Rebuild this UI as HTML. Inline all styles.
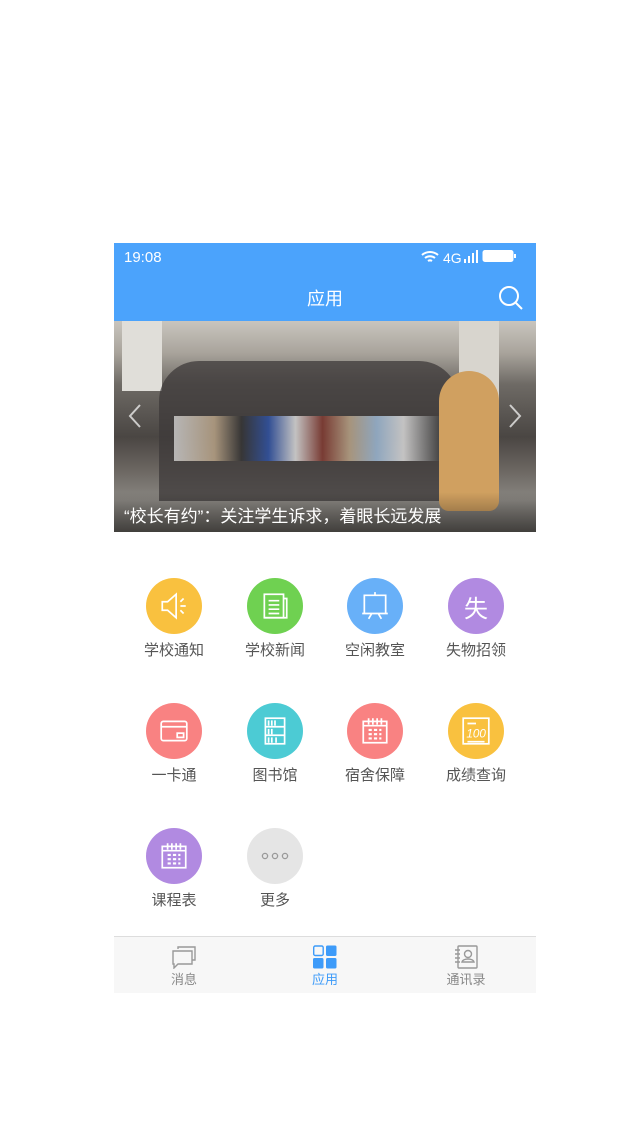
<!DOCTYPE html>
<html><head><meta charset="utf-8"><style>
*{margin:0;padding:0;box-sizing:border-box}
body{width:640px;height:1136px;background:#fff;position:relative;font-family:"Liberation Sans","Noto Sans CJK SC",sans-serif;overflow:hidden}
.scr{position:absolute;left:114px;top:243px;width:422px;height:750px;background:#fff}
.sb{position:absolute;left:0;top:0;width:422px;height:78px;background:#4ba3fc;color:#fff}
.photo{position:absolute;left:0;top:78px;width:422px;height:211px;overflow:hidden;
background:linear-gradient(180deg,#c9c5be 0%,#a9a49c 15%,#6e6a65 30%,#4a4643 55%,#6a6560 70%,#8a8782 85%,#77736e 100%)}
.it{position:absolute;width:100px;text-align:center;font-size:15px;color:#555}
.it .c{width:56px;height:56px;border-radius:50%;margin:0 auto 5px;display:flex;align-items:center;justify-content:center}
.tab{position:absolute;top:693px;left:0;width:422px;height:57px;background:#f7f7f7;border-top:1px solid #ddd}
.tb{position:absolute;top:0;width:100px;text-align:center;font-size:13px;color:#888}
</style></head><body>
<div class="scr">
<div class="sb">
 <div style="position:absolute;left:10px;top:6px;font-size:15px">19:08</div>
 <svg style="position:absolute;left:307px;top:6px" width="104" height="16" viewBox="0 0 104 16">
  <path d="M1 6a12 12 0 0 1 16 0M4 9a8 8 0 0 1 10 0M7 12a3.5 3.5 0 0 1 4 0" stroke="#fff" stroke-width="2" fill="none"/>
  <text x="22" y="14" fill="#fff" font-size="14" font-family="Liberation Sans">4G</text>
  <rect x="43" y="10" width="2" height="4" fill="#fff"/><rect x="47" y="7" width="2" height="7" fill="#fff"/><rect x="51" y="4" width="2" height="10" fill="#fff"/><rect x="55" y="1" width="2" height="13" fill="#fff"/>
  <rect x="62" y="1.5" width="30" height="11" rx="2" fill="#fff" stroke="#fff"/><rect x="93" y="5" width="2" height="4" fill="#fff"/>
 </svg>
 <div style="position:absolute;left:0;width:422px;top:42px;text-align:center;font-size:18px">应用</div>
 <svg style="position:absolute;left:384px;top:42px" width="26" height="26" viewBox="0 0 26 26"><circle cx="11" cy="11" r="9" stroke="#fff" stroke-width="2" fill="none"/><path d="M17.5 17.5L24 24" stroke="#fff" stroke-width="2"/></svg>
</div>
<div class="photo">
 <div style="position:absolute;left:8px;top:0;width:40px;height:70px;background:#e0ded9"></div>
 <div style="position:absolute;left:345px;top:0;width:40px;height:80px;background:#d8d5ce"></div>
 <div style="position:absolute;left:45px;top:40px;width:300px;height:140px;background:#3d3a39;border-radius:40px 40px 0 0;opacity:.75"></div>
 <div style="position:absolute;left:60px;top:95px;width:270px;height:45px;background:linear-gradient(90deg,#ddd 0,#c8b090 15%,#333 25%,#2c54b0 35%,#eee 45%,#8a3a30 55%,#c8b090 65%,#a8c8e8 75%,#eee 85%,#333 100%);opacity:.75"></div>
 <div style="position:absolute;left:325px;top:50px;width:60px;height:140px;background:#d0a060;border-radius:30px 30px 10px 10px"></div>
 <div style="position:absolute;left:0;bottom:0;width:422px;height:40px;background:linear-gradient(180deg,rgba(0,0,0,0),rgba(0,0,0,.45))"></div>
 <div style="position:absolute;left:10px;top:181px;color:#fff;font-size:17px">“校长有约”：关注学生诉求，着眼长远发展</div>
 <svg style="position:absolute;left:14px;top:82px" width="14" height="26"><path d="M12 2L2 13l10 11" stroke="#fff" stroke-opacity=".7" stroke-width="2" fill="none"/></svg>
 <svg style="position:absolute;left:394px;top:82px" width="14" height="26"><path d="M2 2l10 11L2 24" stroke="#fff" stroke-opacity=".7" stroke-width="2" fill="none"/></svg>
</div>

<div class="it" style="left:10px;top:335px"><div class="c" style="background:#f9c13f"><svg width="32" height="32" viewBox="0 0 30 30" fill="none" stroke="#fff" stroke-width="1.6"><path d="M4 11h5l8-7v22l-8-7H4z"/><path d="M21 11l3-3M21 15h5M21 19l3 3"/></svg></div>学校通知</div>
<div class="it" style="left:111px;top:335px"><div class="c" style="background:#6fd151"><svg width="32" height="32" viewBox="0 0 30 30" fill="none" stroke="#fff" stroke-width="1.6"><rect x="5" y="4" width="18" height="22"/><path d="M23 8h3v18H5M9 10h10M9 14h10M9 18h10M9 22h10"/></svg></div>学校新闻</div>
<div class="it" style="left:211px;top:335px"><div class="c" style="background:#68b0f8"><svg width="32" height="32" viewBox="0 0 30 30" fill="none" stroke="#fff" stroke-width="1.6"><path d="M15 2v3M5 5h20v17H5zM3 22h24M12 22l-3 5M18 22l3 5"/></svg></div>空闲教室</div>
<div class="it" style="left:312px;top:335px"><div class="c" style="background:#b18ae1;color:#fff;font-size:24px">失</div>失物招领</div>

<div class="it" style="left:10px;top:460px"><div class="c" style="background:#f98282"><svg width="32" height="32" viewBox="0 0 30 30" fill="none" stroke="#fff" stroke-width="1.6"><rect x="3" y="6" width="24" height="18" rx="2"/><path d="M3 11h24"/><rect x="18" y="17" width="6" height="4"/></svg></div>一卡通</div>
<div class="it" style="left:111px;top:460px"><div class="c" style="background:#4ccbd4"><svg width="32" height="32" viewBox="0 0 30 30" fill="none" stroke="#fff" stroke-width="1.6"><rect x="6" y="3" width="18" height="24"/><path d="M6 11h18M6 19h18M9 5v5M12 5v5M15 5v5M9 13v5M12 13v5M9 21v5M12 21v5M16 21v5"/></svg></div>图书馆</div>
<div class="it" style="left:211px;top:460px"><div class="c" style="background:#f98282"><svg width="32" height="32" viewBox="0 0 30 30" fill="none" stroke="#fff" stroke-width="1.6"><rect x="4" y="6" width="22" height="20"/><path d="M4 10h22M9 3v6M13 3v6M17 3v6M21 3v6"/><path d="M9 14h3M14 14h3M19 14h2M9 18h3M14 18h3M19 18h2M9 22h3M14 22h3M19 22h2" stroke-width="2"/></svg></div>宿舍保障</div>
<div class="it" style="left:312px;top:460px"><div class="c" style="background:#f9c13f"><svg width="32" height="32" viewBox="0 0 30 30" fill="none" stroke="#fff" stroke-width="1.6"><rect x="3" y="3" width="24" height="24"/><path d="M7 8h8M7 25h16"/><text x="6" y="21" fill="#fff" stroke="none" font-size="11" font-style="italic" font-family="Liberation Sans">100</text></svg></div>成绩查询</div>

<div class="it" style="left:10px;top:585px"><div class="c" style="background:#b18ae1"><svg width="32" height="32" viewBox="0 0 30 30" fill="none" stroke="#fff" stroke-width="1.6"><rect x="4" y="6" width="22" height="20"/><path d="M4 10h22M9 3v6M13 3v6M17 3v6M21 3v6"/><path d="M9 14h3M14 14h3M19 14h2M9 18h3M14 18h3M19 18h2M9 22h3M14 22h3M19 22h2" stroke-width="2"/></svg></div>课程表</div>
<div class="it" style="left:111px;top:585px"><div class="c" style="background:#e5e5e5"><svg width="30" height="10" viewBox="0 0 30 10" fill="none" stroke="#999" stroke-width="1.3"><circle cx="5" cy="5" r="2.6"/><circle cx="15" cy="5" r="2.6"/><circle cx="25" cy="5" r="2.6"/></svg></div>更多</div>

<div class="tab">
 <div class="tb" style="left:20px"><svg style="display:block;margin:8px auto 0" width="26" height="24" viewBox="0 0 26 24" fill="none" stroke="#999" stroke-width="1.4"><path d="M7 4V2h17v13h-3"/><path d="M2 6h19v13H7l-4 4v-4H2z"/></svg>消息</div>
 <div class="tb" style="left:161px;color:#3d9bf9"><svg style="display:block;margin:8px auto 0" width="26" height="24" viewBox="0 0 26 24"><rect x="1.7" y="1" width="9.5" height="9.5" rx="1.5" fill="none" stroke="#3d9bf9" stroke-width="1.4"/><rect x="14" y="0.5" width="10.5" height="10.5" rx="1.5" fill="#3d9bf9"/><rect x="1" y="13" width="10.5" height="10.5" rx="1.5" fill="#3d9bf9"/><rect x="14" y="13" width="10.5" height="10.5" rx="1.5" fill="#3d9bf9"/></svg>应用</div>
 <div class="tb" style="left:302px"><svg style="display:block;margin:8px auto 0" width="26" height="24" viewBox="0 0 26 24" fill="none" stroke="#999" stroke-width="1.4"><rect x="5" y="1" width="19" height="22" rx="1"/><path d="M2 5h5M2 9h5M2 13h5M2 17h5"/><circle cx="15" cy="9" r="3.5"/><path d="M9 17c1-4 11-4 12 0z"/></svg>通讯录</div>
</div>
</div>
</body></html>
